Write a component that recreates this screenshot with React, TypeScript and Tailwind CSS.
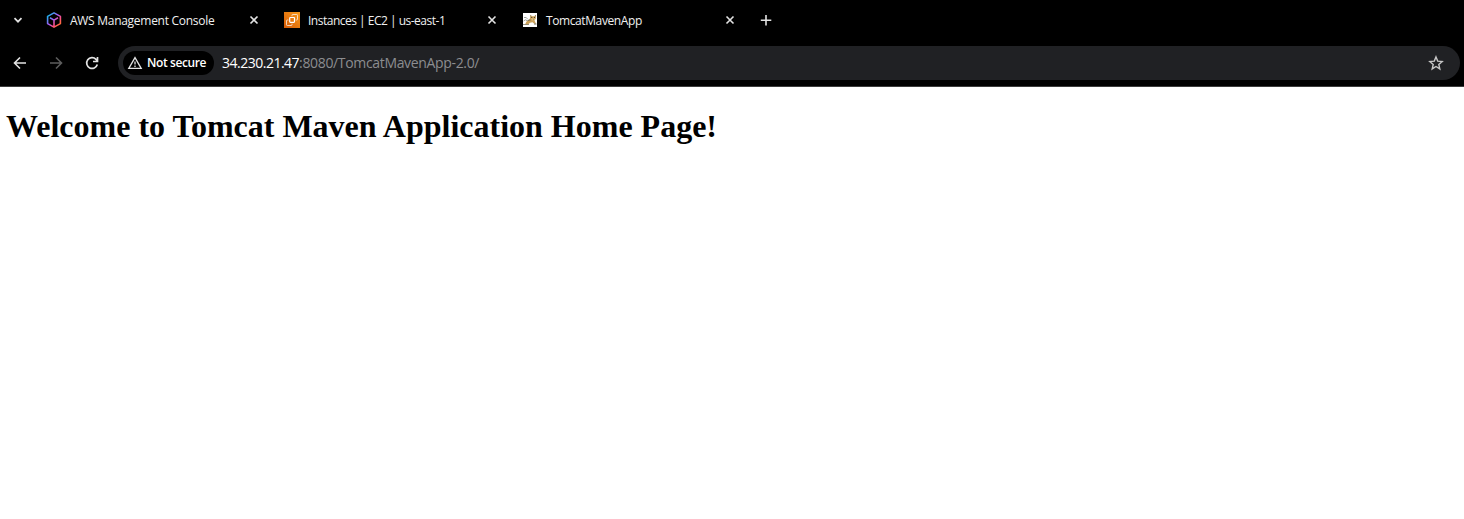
import React from 'react';

const ICON = 'block shrink-0';

function AwsIcon() {
  return (
    <svg className={ICON} width="16" height="16" viewBox="0 0 16 16" fill="none">
      <defs>
        <linearGradient id="aws" x1="2" y1="3" x2="13" y2="13" gradientUnits="userSpaceOnUse">
          <stop offset="0" stopColor="#12b5ea" />
          <stop offset="0.45" stopColor="#a05cf5" />
          <stop offset="0.75" stopColor="#fb4e86" />
          <stop offset="1" stopColor="#ff6a3c" />
        </linearGradient>
      </defs>
      <path
        d="M8 .9 14.400 4.400v7.200L8 15.100 1.600 11.600V4.400ZM4 5.800 8 8.100l4-2.300M8 8.100V15"
        stroke="url(#aws)"
        strokeWidth="1.6"
        strokeLinejoin="round"
      />
    </svg>
  );
}

function Ec2Icon() {
  return (
    <svg className={ICON} width="16" height="16" viewBox="0 0 16 16" fill="none">
      <defs>
        <linearGradient id="ec2" x1="0" y1="16" x2="16" y2="0" gradientUnits="userSpaceOnUse">
          <stop stopColor="#d45b07" />
          <stop offset="1" stopColor="#fb9a1a" />
        </linearGradient>
      </defs>
      <path fill="url(#ec2)" d="M0 0h16v16H0z" />
      <g stroke="#fff" strokeWidth="1" strokeOpacity=".7">
        <rect x="5.700" y="5.500" width="4.800" height="4.800" rx=".7" strokeWidth="1.200" strokeOpacity="1" />
        <path d="M8 4.200V3.300q0-.8.8-.8h3.900q.8 0 .8.8v3.900q0 .8-.8.8h-.9M4.400 8h-1.100q-.8 0-.8.8v3.900q0 .8.8.8h3.900q.8 0 .8-.8v-1" />
      </g>
    </svg>
  );
}

function TomcatIcon() {
  return (
    <svg className={ICON} width="16" height="16" viewBox="0 0 16 16">
      <path fill="#fff" d="M1 1h14v14H1z" />
      <path fill="#cda259" d="M8 6 8.500 3 10 4.200h2.200L13.800 3v3.500L12.500 8.500l1.500 3.200-2-.2-1.500-1.300-2.500.5-2 1.800H3l1.500-3L7.500 7.500Z" />
      <path fill="#77705b" d="M8.300 2.700 9.400 4l-.9.800zM13.800 2.700v2l-1-.8zM5 8.200l3-1 1 1-3 .8zM1 12h6v.8H1zM12 11.500h2.500v.9H12z" />
      <path fill="#f1d89b" d="m9.500 6 1.500 1 1.700-.6-.5 1.500-2.200.3z" />
      <path d="M2 5.500h2.200l1.500 1.700M1.500 9l2-1.200 1.500.8" fill="none" stroke="#888980" strokeWidth=".8" />
      <path fill="#34332c" d="M9.300 5h.9v.9h-.9zM12 5h.9v.9H12zM10.800 7h.7v.7h-.7z" />
    </svg>
  );
}

function CloseIcon() {
  return (
    <svg className={ICON} width="16" height="16" viewBox="0 0 16 16" stroke="#e3e3e3" strokeWidth="1.6">
      <path d="m4.500 4.500 7 7M11.500 4.500l-7 7" />
    </svg>
  );
}

function Tab({ icon, title, spacing }: { icon: React.ReactNode; title: string; spacing: string }) {
  return (
    <div className="flex w-[238px] shrink-0 items-center">
      {icon}
      <span className={`ml-2 flex-1 whitespace-nowrap pt-0.5 text-[12px] leading-4 text-[#f0f0f0] ${spacing}`}>
        <span>{title}</span>
      </span>
      <CloseIcon />
      <span className="w-[22px]" />
    </div>
  );
}

function Arrow({ className }: { className: string }) {
  return (
    <svg className={`${ICON} ${className}`} width="16" height="16" viewBox="0 0 16 16" fill="none" stroke="currentColor" strokeWidth="1.6">
      <path d="M14 8H3M8 2.500 2.500 8 8 13.500" />
    </svg>
  );
}

export default function App() {
  return (
    <div className="flex h-[519px] w-[1464px] flex-col overflow-hidden bg-white">
      <div className="flex h-10 shrink-0 items-center bg-black pl-2.5 font-['Open_Sans',sans-serif]">
        <svg className={ICON} width="16" height="16" viewBox="0 0 16 16" fill="none" stroke="#e3e3e3" strokeWidth="1.7">
          <path d="m4.500 6.200 3.500 3.500 3.500-3.500" />
        </svg>
        <div className="ml-5 flex">
          <Tab icon={<AwsIcon />} title="AWS Management Console" spacing="tracking-[-0.28px]" />
          <Tab icon={<Ec2Icon />} title="Instances | EC2 | us-east-1" spacing="tracking-[-0.5px]" />
          <Tab icon={<TomcatIcon />} title="TomcatMavenApp" spacing="tracking-[-0.4px]" />
        </div>
        <svg className={`${ICON} -ml-0.5`} width="16" height="16" viewBox="0 0 16 16" stroke="#e3e3e3" strokeWidth="1.6">
          <path d="M8 3v10.500M2.800 8.200h10.500" />
        </svg>
      </div>
      <div className="flex h-[47px] shrink-0 items-center border-b border-[#3c3c3c] bg-black pl-3 pr-1 font-['Open_Sans',sans-serif]">
        <Arrow className="text-[#e3e3e3]" />
        <Arrow className="ml-5 rotate-180 text-[#5d5d5d]" />
        <svg className={`${ICON} ml-5`} width="16" height="16" viewBox="0 0 16 16" fill="none" stroke="#e3e3e3" strokeWidth="1.7">
          <path d="M13.300 9.500A5.400 5.400 0 1 1 12 4.300L13.400 5.800M13.500 2v4.500H9" />
        </svg>
        <div className="ml-[18px] flex h-[34px] flex-1 items-center rounded-full bg-[#202124] pl-[5px] pr-4">
          <div className="flex h-6 w-[91px] items-center rounded-full bg-black pl-1">
            <svg className={ICON} width="16" height="16" viewBox="0 0 16 16" fill="none" stroke="#e3e3e3" strokeWidth="1.3">
              <path d="M8 2.600 14.200 13.300H1.800Z" />
              <path d="M8 6.500v3M8 10.500v1.400" />
            </svg>
            <span className="ml-1 whitespace-nowrap text-[12px] font-semibold leading-4 tracking-[-0.4px] text-white"><span>Not secure</span></span>
          </div>
          <div className="ml-2 flex whitespace-nowrap text-[14px] leading-5">
            <span className="tracking-[-0.5px] text-white">34.230.21.47</span>
            <span className="tracking-[-0.34px] text-[#8c8d90]">:8080/TomcatMavenApp-2.0/</span>
          </div>
          <svg className={`${ICON} ml-auto`} width="16" height="16" viewBox="0 0 16 16" fill="none" stroke="#c7c7c7" strokeWidth="1.4">
            <path d="m8 1.900 1.700 4.200 4.500.4-3.400 3 1 4.400L8 11.500l-3.800 2.400 1-4.400-3.400-3 4.500-.4Z" />
          </svg>
        </div>
      </div>
      <main className="flex-1 bg-white pl-1.5 pt-[21px]">
        <h1 className="whitespace-nowrap font-['Liberation_Serif',serif] text-[32px] font-bold leading-[37px] text-black"><span>Welcome to Tomcat Maven Application Home Page!</span></h1>
      </main>
    </div>
  );
}
